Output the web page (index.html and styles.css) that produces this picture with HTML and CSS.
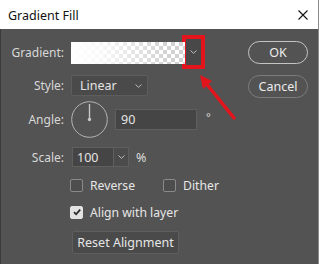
FILE: index.html
```html
<!DOCTYPE html>
<html>
<head>
<meta charset="utf-8">
<link rel="stylesheet" href="styles.css">
</head>
<body>
<div class="dialog">
  <div class="titlebar">
    <span class="title">Gradient Fill</span>
    <svg class="close" width="10" height="10" viewBox="0 0 10 10"><path d="M0.5 0.5L9.5 9.5M9.5 0.5L0.5 9.5" stroke="#111" stroke-width="1.1" fill="none"/></svg>
  </div>
  <div class="content">
    <div class="form">
      <div class="row row-gradient">
        <span class="label">Gradient:</span>
        <div class="swatch"><div class="swatch-fade"></div></div>
        <div class="drop-btn"><svg width="7" height="4" viewBox="0 0 7 4"><path d="M0.5 0.5L3.5 3.3L6.5 0.5" stroke="#bdbdbd" stroke-width="1" fill="none"/></svg></div>
      </div>
      <div class="row row-style">
        <span class="label">Style:</span>
        <div class="select"><span>Linear</span><svg width="7" height="4" viewBox="0 0 7 4"><path d="M0.5 0.5L3.5 3.3L6.5 0.5" stroke="#bdbdbd" stroke-width="1" fill="none"/></svg></div>
      </div>
      <div class="row row-angle">
        <span class="label">Angle:</span>
        <svg class="dial" width="37" height="37" viewBox="0 0 37 37"><circle cx="18.5" cy="18.5" r="17.8" stroke="#b4b4b4" stroke-width="1" fill="none"/><line x1="18.5" y1="3" x2="18.5" y2="18" stroke="#c8c8c8" stroke-width="1.4"/><circle cx="18.5" cy="18.5" r="1.7" fill="#c8c8c8"/></svg>
        <div class="field angle-field">90</div>
        <span class="unit deg">°</span>
      </div>
      <div class="row row-scale">
        <span class="label">Scale:</span>
        <div class="combo"><span class="combo-val">100</span><span class="combo-btn"><svg width="7" height="4" viewBox="0 0 7 4"><path d="M0.5 0.5L3.5 3.3L6.5 0.5" stroke="#bdbdbd" stroke-width="1" fill="none"/></svg></span></div>
        <span class="unit">%</span>
      </div>
      <div class="row row-check">
        <label class="check"><span class="box"></span>Reverse</label>
        <label class="check dither"><span class="box"></span>Dither</label>
      </div>
      <div class="row row-check row-align">
        <label class="check"><span class="box checked"><svg width="10" height="10" viewBox="0 0 10 10"><path d="M2 5.2L4.1 7.3L8.2 2.6" stroke="#2a2a2a" stroke-width="1.8" fill="none"/></svg></span>Align with layer</label>
      </div>
      <div class="row row-reset">
        <div class="reset-btn">Reset Alignment</div>
      </div>
    </div>
    <div class="buttons">
      <div class="btn btn-ok">OK</div>
      <div class="btn btn-cancel">Cancel</div>
    </div>
  </div>
  <svg class="arrow" width="319" height="264" viewBox="0 0 319 264"><line x1="234" y1="118" x2="205" y2="82" stroke="#e3141b" stroke-width="3.5" stroke-linecap="round"/><polygon points="200,75 212,81 203,89" fill="#e3141b"/></svg>
</div>
</body>
</html>
```
FILE: styles.css
```css
* { box-sizing: border-box; }
html, body { margin: 0; padding: 0; }
body {
  width: 319px;
  height: 264px;
  overflow: hidden;
  background: #535353;
  font-family: "Noto Sans", "Open Sans", sans-serif;
  font-size: 12px;
  color: #e4e4e4;
}
.dialog {
  position: relative;
  width: 319px;
  height: 264px;
  background: #535353;
  border-left: 1px solid #3c3c3c;
  border-right: 1px solid #8a8a8a;
}
.titlebar {
  height: 29px;
  background: #ffffff;
  display: flex;
  align-items: center;
  justify-content: space-between;
  padding: 0 10px 0 8px;
  margin-left: -1px;
}
.title {
  color: #111;
  font-size: 12.5px;
  padding-top: 1px;
}
.close { display: block; }
.content {
  display: flex;
}
.form {
  flex: 1;
  display: flex;
  flex-direction: column;
}
.row {
  display: flex;
  align-items: center;
}
.label {
  width: 63px;
  text-align: right;
  color: #d8d8d8;
  margin-right: 7px;
}
.row-gradient { margin-top: 10px; height: 26px; align-items: flex-start; }
.row-gradient .label { margin-top: 5px; }
.swatch {
  margin-top: 3px;
  width: 114px;
  height: 22px;
  background-color: #fff;
  background-image:
    linear-gradient(45deg, #d2d2d2 25%, transparent 25%, transparent 75%, #d2d2d2 75%),
    linear-gradient(45deg, #d2d2d2 25%, transparent 25%, transparent 75%, #d2d2d2 75%);
  background-size: 8px 8px;
  background-position: 0 0, 4px 4px;
  position: relative;
}
.swatch-fade {
  position: absolute;
  inset: 0;
  background: linear-gradient(to right, #fff 0%, rgba(255,255,255,0.85) 25%, rgba(255,255,255,0) 85%);
}
.drop-btn {
  margin-left: 1px;
  width: 15px;
  height: 26px;
  background: #484848;
  outline: 4px solid #e3141b;
  display: flex;
  align-items: center;
  justify-content: center;
}
.drop-btn svg { display: block; }
.row-style { margin-top: 10px; height: 21px; }
.select {
  width: 77px;
  height: 21px;
  background: #4a4a4a;
  border: 1px solid #5d5d5d;
  border-radius: 2px;
  display: flex;
  align-items: center;
  justify-content: space-between;
  padding: 0 5px 0 8px;
  font-size: 12.5px;
}
.select svg { display: block; }
.row-angle { margin-top: 5px; height: 37px; }
.dial { display: block; }
.field {
  height: 21px;
  background: #454545;
  border: 1px solid #5f5f5f;
  display: flex;
  align-items: center;
  padding-left: 5px;
  font-size: 12.5px;
}
.angle-field { width: 82px; margin-left: 7px; }
.unit { margin-left: 9px; color: #dcdcdc; }
.deg { font-size: 11px; margin-top: -6px; }
.row-scale { margin-top: 9px; height: 20px; }
.combo {
  width: 57px;
  height: 20px;
  display: flex;
  background: #454545;
  border: 1px solid #5f5f5f;
  margin-left: 1px;
}
.combo-val {
  flex: 1;
  display: flex;
  align-items: center;
  padding-left: 4px;
  font-size: 12.5px;
  border-right: 1px solid #5f5f5f;
}
.combo-btn {
  width: 14px;
  display: flex;
  align-items: center;
  justify-content: center;
  background: #4b4b4b;
}
.combo-btn svg { display: block; }
.row-scale .unit { margin-left: 7px; font-size: 12.5px; }
.row-check { padding-left: 69px; height: 16px; margin-top: 10px; }
.row-align { margin-top: 11px; }
.check {
  display: flex;
  align-items: center;
  font-size: 12.2px;
  color: #e6e6e6;
}
.dither { margin-left: 28px; }
.box {
  width: 13px;
  height: 13px;
  border: 1px solid #8a8a8a;
  border-radius: 2px;
  background: #4d4d4d;
  margin-right: 7px;
  display: flex;
  align-items: center;
  justify-content: center;
}
.box.checked { background: #e2e2e2; border-color: #e2e2e2; }
.box svg { display: block; }
.row-reset { padding-left: 71px; margin-top: 11px; }
.reset-btn {
  width: 107px;
  height: 23px;
  background: #4a4a4a;
  border: 1px solid #5e5e5e;
  border-radius: 2px;
  display: flex;
  align-items: center;
  justify-content: center;
  font-size: 12.5px;
  color: #e6e6e6;
}
.buttons {
  width: 60px;
  margin-right: 10px;
  margin-top: 12px;
  display: flex;
  flex-direction: column;
  gap: 11px;
}
.btn {
  height: 23px;
  border-radius: 12px;
  display: flex;
  align-items: center;
  justify-content: center;
  font-size: 12.5px;
  color: #ececec;
}
.btn-ok { border: 1.5px solid #c4c4c4; }
.btn-cancel { border: 1px solid #7c7c7c; }
.arrow {
  position: absolute;
  left: -1px;
  top: 0;
  pointer-events: none;
}
```
